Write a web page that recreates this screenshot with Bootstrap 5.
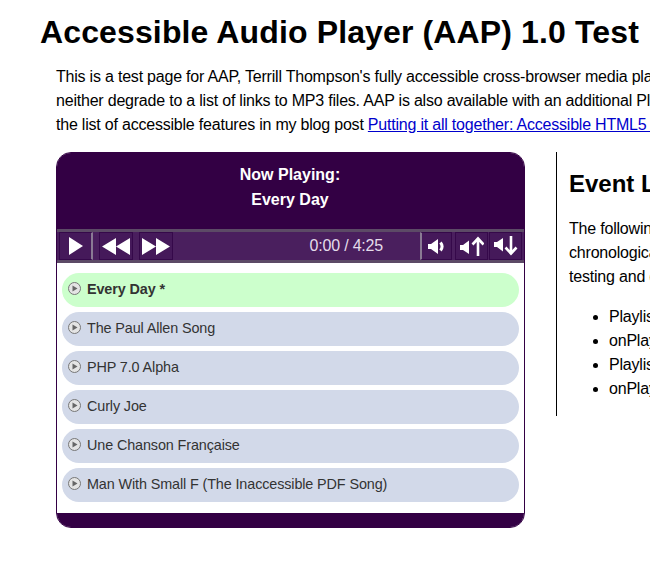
<!DOCTYPE html>
<html lang="en">
<head>
<meta charset="utf-8">
<title>Accessible Audio Player (AAP) 1.0 Test</title>
<link href="https://cdn.jsdelivr.net/npm/bootstrap@5.3.0/dist/css/bootstrap.min.css" rel="stylesheet">
<style>
html,body{overflow:hidden;height:100%;background:#fff;}
body{font-family:"Liberation Sans",Arial,sans-serif;font-size:16px;color:#000;}
.sheet{width:1100px;padding:16px 0 0 40px;}
.page-title{font-size:32px;font-weight:700;line-height:32px;margin:0 0 17px;color:#000;letter-spacing:.13px;white-space:nowrap;}
.intro{margin:0 0 15px 16px;line-height:24px;white-space:nowrap;letter-spacing:-.21px;}
.intro a{color:#00c;}
.stage{margin-left:16px;gap:31px;}
.player{width:469px;flex:none;background:#fff;border:1px solid #330044;border-radius:15px;overflow:hidden;}
.now{background:#330044;color:#fff;font-weight:700;text-align:center;height:76px;padding:9px 1px 0 0;line-height:25px;}
.bar{height:34px;background:#4a1f5e;border-top:3px solid #5c4a66;border-bottom:3px solid #5c4a66;padding:0 2px;}
.ctl{width:33px;height:28px;background:#45195a;border:1px solid #35084a;padding:0;display:flex;align-items:center;justify-content:center;}
.ctl svg{display:block;}
.ctl-main{border-right:2px solid #8a7a94;width:34px;margin-right:6px;}
.ctl-skip{width:34px;}
.ctl-next{margin-left:6px;}
.ctl-mute{border-left:2px solid #8a7a94;width:32px;margin-right:3px;}
.ctl-up{margin-right:1px;}
.clock{color:#e4dcea;font-size:16px;letter-spacing:-.2px;margin-left:auto;margin-right:37px;}
.tracks{padding:10px 5px 11px;margin:0;list-style:none;display:flex;flex-direction:column;gap:5px;}
.track{height:34px;border-radius:17px;background:#d2d9e9;color:#333;font-size:14.4px;letter-spacing:-.12px;padding:0 6px;gap:6px;}
.track.on{background:#ccffcc;font-weight:700;}
.track svg{flex:none;margin-top:-3px;}
.foot{height:14px;background:#330044;}
.side{width:500px;flex:none;height:264px;border-left:1px solid #000;padding-left:12px;letter-spacing:-.2px;}
.side h2{font-size:24px;font-weight:700;line-height:24px;margin:20px 0 21px;color:#000;letter-spacing:0;}
.side p{line-height:24px;margin:0 0 16px;white-space:nowrap;}
.side ul{margin:0;padding-left:40px;line-height:24px;}
</style>
</head>
<body>
<div class="sheet">
  <h1 class="page-title">Accessible Audio Player (AAP) 1.0 Test</h1>
  <p class="intro">This is a test page for AAP, Terrill Thompson's fully accessible cross-browser media player<br>neither degrade to a list of links to MP3 files. AAP is also available with an additional Playlist<br>the list of accessible features in my blog post <a href="#">Putting it all together: Accessible HTML5 Media</a></p>
  <div class="d-flex align-items-start stage">
    <section class="player">
      <div class="now">Now Playing:<br>Every Day</div>
      <div class="bar d-flex align-items-center">
        <button class="ctl ctl-main" aria-label="Play"><svg width="14" height="18" viewBox="0 0 14 18"><path d="M0 0 14 9 0 18Z" fill="#fff"/></svg></button>
        <button class="ctl ctl-skip" aria-label="Rewind"><svg width="28" height="17" viewBox="0 0 28 17"><path d="M0 8.5 14 0V17ZM14 8.5 28 0V17Z" fill="#fff"/></svg></button>
        <button class="ctl ctl-skip ctl-next" aria-label="Forward"><svg width="28" height="17" viewBox="0 0 28 17"><path d="M0 0 14 8.5 0 17ZM14 0 28 8.5 14 17Z" fill="#fff"/></svg></button>
        <span class="clock">0:00 / 4:25</span>
        <button class="ctl ctl-mute" aria-label="Mute"><svg width="17" height="15" viewBox="0 0 17 15"><path d="M0 5H3L10 0V15L3 10H0Z" fill="#fff"/><path d="M12.5 3.5C14.5 6 14.5 9 12.5 11.5" fill="none" stroke="#fff" stroke-width="3"/></svg></button>
        <button class="ctl ctl-up" aria-label="Volume up"><svg width="24" height="20" viewBox="0 0 24 20"><path d="M0 9H3L9 4.500V18L3 14H0Z" fill="#fff"/><path d="M18 20V3M12.500 8.500 18 2.500 23.500 8.500" fill="none" stroke="#fff" stroke-width="2.6"/></svg></button>
        <button class="ctl" aria-label="Volume down"><svg width="24" height="20" viewBox="0 0 24 20"><path d="M0 6H3L9 2V15.500L3 11H0Z" fill="#fff"/><path d="M17 0V17M11.500 11.500 17 17.500 22.500 11.500" fill="none" stroke="#fff" stroke-width="2.6"/></svg></button>
      </div>
      <ul class="tracks">
        <li class="track on d-flex align-items-center"><svg width="13" height="13" viewBox="0 0 13 13"><circle cx="6.500" cy="6.500" r="6" fill="#e4e4e4" stroke="#777"/><path d="M4.500 3.500 9.500 6.500 4.500 9.500Z" fill="#666"/></svg>Every Day *</li>
        <li class="track d-flex align-items-center"><svg width="13" height="13" viewBox="0 0 13 13"><circle cx="6.500" cy="6.500" r="6" fill="#e4e4e4" stroke="#777"/><path d="M4.500 3.500 9.500 6.500 4.500 9.500Z" fill="#666"/></svg>The Paul Allen Song</li>
        <li class="track d-flex align-items-center"><svg width="13" height="13" viewBox="0 0 13 13"><circle cx="6.500" cy="6.500" r="6" fill="#e4e4e4" stroke="#777"/><path d="M4.500 3.500 9.500 6.500 4.500 9.500Z" fill="#666"/></svg>PHP 7.0 Alpha</li>
        <li class="track d-flex align-items-center"><svg width="13" height="13" viewBox="0 0 13 13"><circle cx="6.500" cy="6.500" r="6" fill="#e4e4e4" stroke="#777"/><path d="M4.500 3.500 9.500 6.500 4.500 9.500Z" fill="#666"/></svg>Curly Joe</li>
        <li class="track d-flex align-items-center"><svg width="13" height="13" viewBox="0 0 13 13"><circle cx="6.500" cy="6.500" r="6" fill="#e4e4e4" stroke="#777"/><path d="M4.500 3.500 9.500 6.500 4.500 9.500Z" fill="#666"/></svg>Une Chanson Française</li>
        <li class="track d-flex align-items-center"><svg width="13" height="13" viewBox="0 0 13 13"><circle cx="6.500" cy="6.500" r="6" fill="#e4e4e4" stroke="#777"/><path d="M4.500 3.500 9.500 6.500 4.500 9.500Z" fill="#666"/></svg>Man With Small F (The Inaccessible PDF Song)</li>
      </ul>
      <div class="foot"></div>
    </section>
    <aside class="side">
      <h2>Event Log</h2>
      <p>The following<br>chronological<br>testing and debugging</p>
      <ul>
        <li>Playlist</li>
        <li>onPlay</li>
        <li>Playlist</li>
        <li>onPlay</li>
      </ul>
    </aside>
  </div>
</div>
<script src="https://cdn.jsdelivr.net/npm/bootstrap@5.3.0/dist/js/bootstrap.bundle.min.js"></script>
</body>
</html>
